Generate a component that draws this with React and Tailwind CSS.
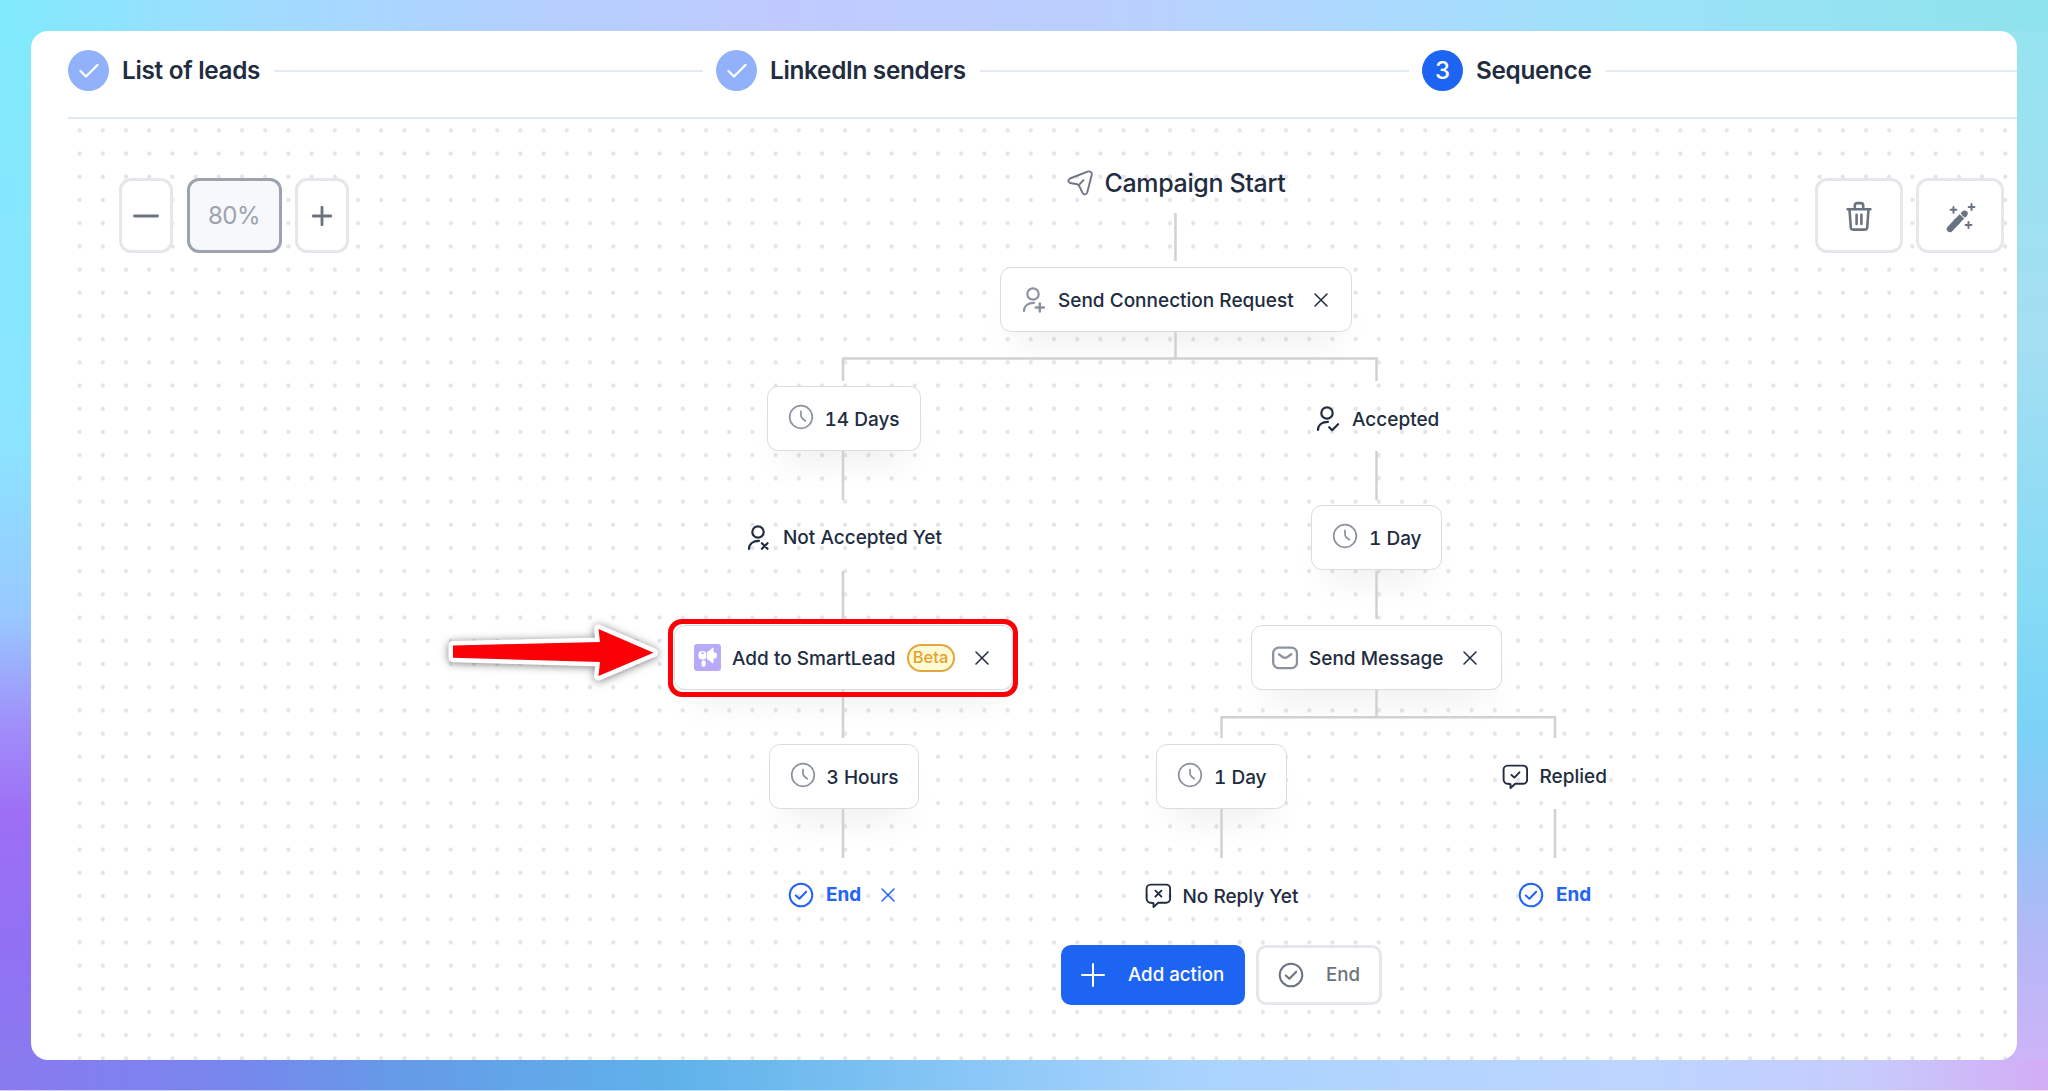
const steps = [
    { label: "List of leads", done: true, width: "w-[648px]" },
    { label: "LinkedIn senders", done: true, width: "w-[706px]" },
    { label: "Sequence", number: 3, width: "flex-1" },
];

// All flow icons are drawn on a 26x26 grid
function Icon({ children, className = "", stroke = 2 }) {
    return (
        <svg viewBox="0 0 26 26" className={`w-[26px] h-[26px] shrink-0 ${className}`} fill="none" stroke="currentColor"
            strokeWidth={stroke} strokeLinecap="round" strokeLinejoin="round">
            {children}
        </svg>
    );
}

const Person = ({ children, className }) => (
    <Icon className={className} stroke={2.2}>
        <circle cx="12" cy="7" r="5.7" />
        <path d="M3 24C3 19 7 15.8 13 15.8" />
        {children}
    </Icon>
);

const PersonAdd = () => <Person className="text-[#8b929e]"><path d="M18.8 16.4v8M14.8 20.4h8" strokeWidth="2.5" /></Person>;
const PersonCheck = () => <Person><path d="M14.2 21.2l2.9 3 6-6" /></Person>;
const PersonX = () => <Person><path d="M15.9 18.2l5.6 5.6M21.5 18.2l-5.6 5.6" /></Person>;

const Clock = () => (
    <Icon className="text-[#8b929e] -mt-[3px]" stroke={1.7}>
        <circle cx="13" cy="13" r="11.3" />
        <path d="M13 7.4v4.2c0 2 1.5 3.4 4.3 5.2" />
    </Icon>
);

const Mail = () => (
    <Icon className="text-[#8b929e]" stroke={2.3}>
        <rect x="1.2" y="2.6" width="23.8" height="20.6" rx="5.6" />
        <path d="M7 9.3l3.6 2.7c1.5 1.1 3.3 1.1 4.8 0L19.3 9.3" />
    </Icon>
);

const CheckCircle = ({ className }) => (
    <Icon className={className} stroke={2}>
        <circle cx="13" cy="13" r="11.3" />
        <path d="M7.8 13.4l3.6 3.3 6.8-7" />
    </Icon>
);

const Bubble = ({ children }) => (
    <Icon stroke={1.9}>
        <path d="M5.5 1.6h15.6a4 4 0 0 1 4 4v10.2a4 4 0 0 1-4 4H13.2l-4.700 4.200v-3.800l-2.400-.4a4.300 4.300 0 0 1-4.500-4V5.600a4 4 0 0 1 3.900-4z" />
        {children}
    </Icon>
);

const BubbleCheck = () => <Bubble><path d="M9.5 11l2.900 2.600 5-5.300" /></Bubble>;
const BubbleX = () => <Bubble><path d="M10.4 7.700l6 6M16.400 7.700l-6 6" /></Bubble>;

const Plane = () => (
    <Icon className="text-[#6f7583]" stroke={1.9}>
        <path d="M3 8.500L20.500 1.700c2.600-.9 4.800.6 4.200 3.300L20.200 22.500c-.7 2.400-3.600 2.600-4.700.4l-3.200-6.800c-.4-.9-1-1.400-1.900-1.800L3.200 13c-2.400-1-2.500-3.500-.2-4.500z" />
        <path d="M11.600 15.300l4.800-5.200" />
    </Icon>
);

const Megaphone = () => (
    <svg viewBox="0 0 27 27" className="w-[27px] h-[27px] shrink-0">
        <rect width="27" height="27" rx="3" fill="#b8aaf9" />
        <g fill="#fff">
            <rect x="4.500" y="7" width="7.800" height="8.600" rx="3.600" />
            <path d="M12.800 7.800c2-.6 3.600-1.900 5-3.600.6-.7 1.800-.4 1.800.6v3.700h1.300c1.300 0 2.200 1.300 2.200 3s-.9 3-2.200 3h-1.300v3.700c0 1-1.200 1.300-1.800.6-1.400-1.700-3-3-5-3.600z" />
            <rect x="7.600" y="16.300" width="4" height="6.500" rx="1.800" />
        </g>
        <circle cx="8.600" cy="9.200" r="1.100" fill="#b8aaf9" />
    </svg>
);

const Close = ({ className = "" }) => (
    <button className={`shrink-0 ${className}`}>
        <svg viewBox="0 0 14 14" className="w-3.5 h-3.5" stroke="currentColor" strokeWidth="1.500" strokeLinecap="round">
            <path d="M1 1l12 12M13 1L1 13" />
        </svg>
    </button>
);

const cards = [
    { label: "Send Connection Request", icon: PersonAdd, pos: "left-[932px] top-[148px] w-[352px] pl-5", close: true },
    { label: "14 Days", icon: Clock, pos: "left-[698.500px] top-[267px] w-[154px] pl-5" },
    { label: "1 Day", icon: Clock, pos: "left-[1243px] top-[386px] w-[131px] pl-5" },
    { label: "Add to SmartLead", icon: Megaphone, pos: "left-[606px] top-[506px] w-[339px] pl-[19px]", beta: true, close: true },
    { label: "Send Message", icon: Mail, pos: "left-[1183px] top-[506px] w-[251px] pl-5", close: true },
    { label: "3 Hours", icon: Clock, pos: "left-[700.500px] top-[625px] w-[150px] pl-5" },
    { label: "1 Day", icon: Clock, pos: "left-[1088px] top-[625px] w-[131px] pl-5" },
];

const states = [
    { label: "Accepted", icon: PersonCheck, pos: "left-[1246.500px] top-[267px]" },
    { label: "Not Accepted Yet", icon: PersonX, pos: "left-[677.500px] top-[385.500px]" },
    { label: "Replied", icon: BubbleCheck, pos: "left-[1434px] top-[624.500px]" },
    { label: "No Reply Yet", icon: BubbleX, pos: "left-[1077px] top-[744px]" },
];

const connectors = [
    "M1107.500 94V142",
    "M1107.500 213V239M775 262V239.500H1308.500V262",
    "M775 332V381",
    "M775 452V501",
    "M775 571V619",
    "M775 690V739",
    "M1308.500 332V381",
    "M1308.500 452V500",
    "M1308.500 571V598M1153.500 619V598.200H1487V619",
    "M1153.500 690V739",
    "M1487 690V739",
];

function Stepper() {
    return (
        <div className="ml-[37px] h-[88px] flex items-center pb-[7px] border-b-2 border-[#e2e8f0]">
            {steps.map((s) => (
                <div key={s.label} className={`${s.width} flex items-center`}>
                    <div className={`w-[41px] h-[41px] shrink-0 rounded-full flex items-center justify-center text-white text-2xl font-medium ${s.done ? "bg-[#92b1fb]" : "bg-[#1d64f2]"}`}>
                        {s.done ? (
                            <svg viewBox="0 0 20 14" className="w-5 h-3.5" fill="none" stroke="#fff" strokeWidth="2.200" strokeLinecap="round" strokeLinejoin="round">
                                <path d="M1.500 7l5.500 5.500L18.500 1" />
                            </svg>
                        ) : s.number}
                    </div>
                    <span className="ml-[13px] text-[24.300px] tracking-[-0.012em] leading-none font-semibold whitespace-nowrap">{s.label}</span>
                    <div className={`ml-3.5 h-0.5 flex-1 bg-[#e4eaf0] ${s.number ? "" : "mr-[13px]"}`} />
                </div>
            ))}
        </div>
    );
}

function Toolbar() {
    const box = "h-[75px] bg-white border-3 border-[#e5e7eb] rounded-xl flex items-center justify-center text-[#6b7280]";
    return (
        <div className="relative flex justify-between pt-[59px] pl-[51px] pr-[13px]">
            <div className="flex gap-[13.500px]">
                <button className={`${box} w-[54px]`}>
                    <svg viewBox="0 0 26 26" className="w-[26px]" stroke="currentColor" strokeWidth="2.800" strokeLinecap="round"><path d="M1.500 13h23" /></svg>
                </button>
                <div className="w-[95px] h-[75px] border-3 border-[#9ca3af] rounded-xl bg-[#f5f7fc]/90 flex items-center justify-center text-2xl tracking-tight text-[#9ca3af]">80%</div>
                <button className={`${box} w-[54px]`}>
                    <svg viewBox="0 0 20 20" className="w-5" stroke="currentColor" strokeWidth="2.800" strokeLinecap="round"><path d="M1.300 10h17.400M10 1.300v17.400" /></svg>
                </button>
            </div>
            <div className="flex gap-[13px]">
                <button className={`${box} w-[88px]`}>
                    <svg viewBox="0 0 26 30" className="w-[26px] h-[30px]" fill="none" stroke="currentColor" strokeWidth="2.600" strokeLinecap="round" strokeLinejoin="round">
                        <path d="M1.600 8.300h22.800M8.800 8V4.400c0-1.500.9-2.300 2.300-2.300h3.800c1.400 0 2.300.8 2.300 2.300V8" />
                        <path d="M3.500 8.500l1.300 18c.1 1.300 1 2.100 2.300 2.100h11.800c1.300 0 2.200-.8 2.300-2.100l1.300-18M10.600 13.700v9.300M15.400 13.700v9.300" />
                    </svg>
                </button>
                <button className={`${box} w-[88px]`}>
                    <svg viewBox="0 0 30 30" className="w-[30px] h-[30px] mt-1 ml-0.5" fill="none" stroke="currentColor" strokeWidth="6.300">
                        <path d="M3.900 26L11 18.500" strokeLinecap="round" />
                        <path d="M10 19.500L15.900 13.400" />
                        <path d="M16.800 12.400L18.500 10.700" />
                        <circle cx="18.700" cy="10.500" r="3.100" fill="currentColor" stroke="none" />
                        <path d="M7.500 3.900v5.800M4.600 6.800h5.800M25.500 1.100v5.800M22.600 4h5.800M22.500 19.100v5.800M19.600 22h5.800" strokeWidth="2" strokeLinecap="round" />
                    </svg>
                </button>
            </div>
        </div>
    );
}

export default function App() {
    return (
        <div className="w-[2048px] h-[1091px] p-[31px] overflow-hidden relative font-['Inter',sans-serif] text-[#212c40] bg-[#8b7bf0]">
            {/* Coloured frame */}
            <div className="absolute inset-0 flex flex-col">
                <div className="h-[31px] bg-[linear-gradient(90deg,#7feafd_0%,#a0dcff_12%,#b2d0ff_25%,#c0caff_38%,#bad0ff_55%,#abdaff_68%,#9ce2f8_80%,#8ee3ec_100%)]" />
                <div className="flex-1 flex justify-between">
                    <div className="w-12 bg-[linear-gradient(180deg,#82eafd_0%,#8be4ff_40%,#98c8ff_57%,#a08cf9_68%,#9d6ff5_76%,#9270f4_88%,#897aef_100%)]" />
                    <div className="w-12 bg-[linear-gradient(180deg,#96e4f0_0%,#a4def2_30%,#86dbf5_55%,#7bd2f6_68%,#93c4f7_78%,#b3b8f6_88%,#cdb4f7_100%)]" />
                </div>
                <div className="h-[31px] border-b border-white/60 bg-[linear-gradient(90deg,#8a7af0_0%,#7786ed_11%,#649ce7_20%,#5fb2ea_33%,#82c4f4_45%,#a9d3fe_58%,#bcd5ff_80%,#c6ccfb_91%,#d3acf6_100%)]" />
            </div>

            <div className="relative w-[1986px] h-[1029px] bg-white rounded-[17px] overflow-hidden">
                <Stepper />

                <div className="relative ml-[37px] h-[941px]">
                    <svg className="absolute inset-0 w-full h-full">
                        <defs>
                            <pattern id="dots" width="23.200" height="23.200" patternUnits="userSpaceOnUse">
                                <circle cx="11.600" cy="11.400" r="2.100" fill="#e3e4e9" />
                            </pattern>
                        </defs>
                        <rect width="100%" height="100%" fill="url(#dots)" />
                    </svg>

                    <Toolbar />

                    {/* Flow nodes */}
                    <div className="absolute left-[999px] top-[50px] h-7 flex items-center gap-[11.500px] text-[25px] tracking-[-0.014em] leading-none font-medium whitespace-nowrap">
                        <Plane />
                        Campaign Start
                    </div>

                    {cards.map((c, i) => (
                        <div key={i} className={`absolute ${c.pos} h-[65px] flex items-center bg-white border-[1.500px] border-[#dcdcde] rounded-[11px] shadow-[0_24px_36px_-14px_rgba(0,0,0,0.07)] text-[19px] leading-none font-medium tabular-nums whitespace-nowrap`}>
                            <c.icon />
                            <span className="ml-[11px] pt-px">{c.label}</span>
                            {c.beta && (
                                <span className="ml-[11px] h-7 w-[48px] flex items-center justify-center rounded-full border-2 border-[#e5a540] bg-[#fefbd4] text-[#e5a02f] text-[16.500px] font-medium">Beta</span>
                            )}
                            {c.close && <Close className="ml-5" />}
                        </div>
                    ))}

                    <svg className="absolute inset-0 w-full h-full" fill="none" stroke="#d0d1d2" strokeWidth="2.500">
                        {connectors.map((d) => <path key={d} d={d} />)}
                    </svg>

                    {states.map((s) => (
                        <div key={s.label} className={`absolute ${s.pos} h-[66px] flex items-center gap-[11.500px] text-[19px] leading-none font-medium whitespace-nowrap`}>
                            <s.icon />
                            {s.label}
                        </div>
                    ))}

                    <div className="absolute left-[720px] top-[762.500px] h-[26px] flex items-center gap-[12px] text-[18.900px] leading-none font-bold text-[#2264f3]">
                        <CheckCircle />
                        <span className="pt-0.5">End</span>
                        <Close className="ml-2" />
                    </div>
                    <div className="absolute left-[1450px] top-[762.500px] h-[26px] flex items-center gap-[12px] text-[18.900px] leading-none font-bold text-[#2264f3]">
                        <CheckCircle />
                        <span className="pt-0.5">End</span>
                    </div>

                    <div className="absolute left-[993px] top-[825.500px] flex gap-[11px] text-[18.700px] leading-none font-medium whitespace-nowrap">
                        <button className="w-[184px] h-[60px] pl-[20px] flex items-center gap-[23px] rounded-[10px] bg-[#1d64f2] text-white">
                            <svg viewBox="0 0 24 24" className="w-6 h-6" stroke="currentColor" strokeWidth="2" strokeLinecap="round"><path d="M1 12h22M12 1v22" /></svg>
                            <span className="pt-0.5">Add action</span>
                        </button>
                        <button className="w-[126px] h-[60px] pl-[19px] flex items-center gap-[22px] rounded-[10px] border-3 border-[#e5e7eb] bg-white text-[#6b7280]">
                            <CheckCircle />
                            <span className="pt-0.5">End</span>
                        </button>
                    </div>

                    {/* Highlight around the SmartLead step */}
                    <div className="absolute left-[600px] top-[500px] w-[350px] h-[78px] border-[5px] border-[#fb0007] rounded-[14px]" />
                    <svg viewBox="0 0 240 80" className="absolute left-[370px] top-[494px] w-[240px] h-20 drop-shadow-[0_1px_4px_rgba(0,0,0,0.5)]" strokeLinejoin="round">
                        <path d="M15 32.500L162 29L160.500 16L215.500 39.700L160.500 63L162 49L15 44.700Z" fill="#fff" stroke="#fff" strokeWidth="9" />
                        <path d="M15 32.500L162 29L160.500 16L215.500 39.700L160.500 63L162 49L15 44.700Z" fill="#fb0007" />
                    </svg>
                </div>
            </div>
        </div>
    );
}
